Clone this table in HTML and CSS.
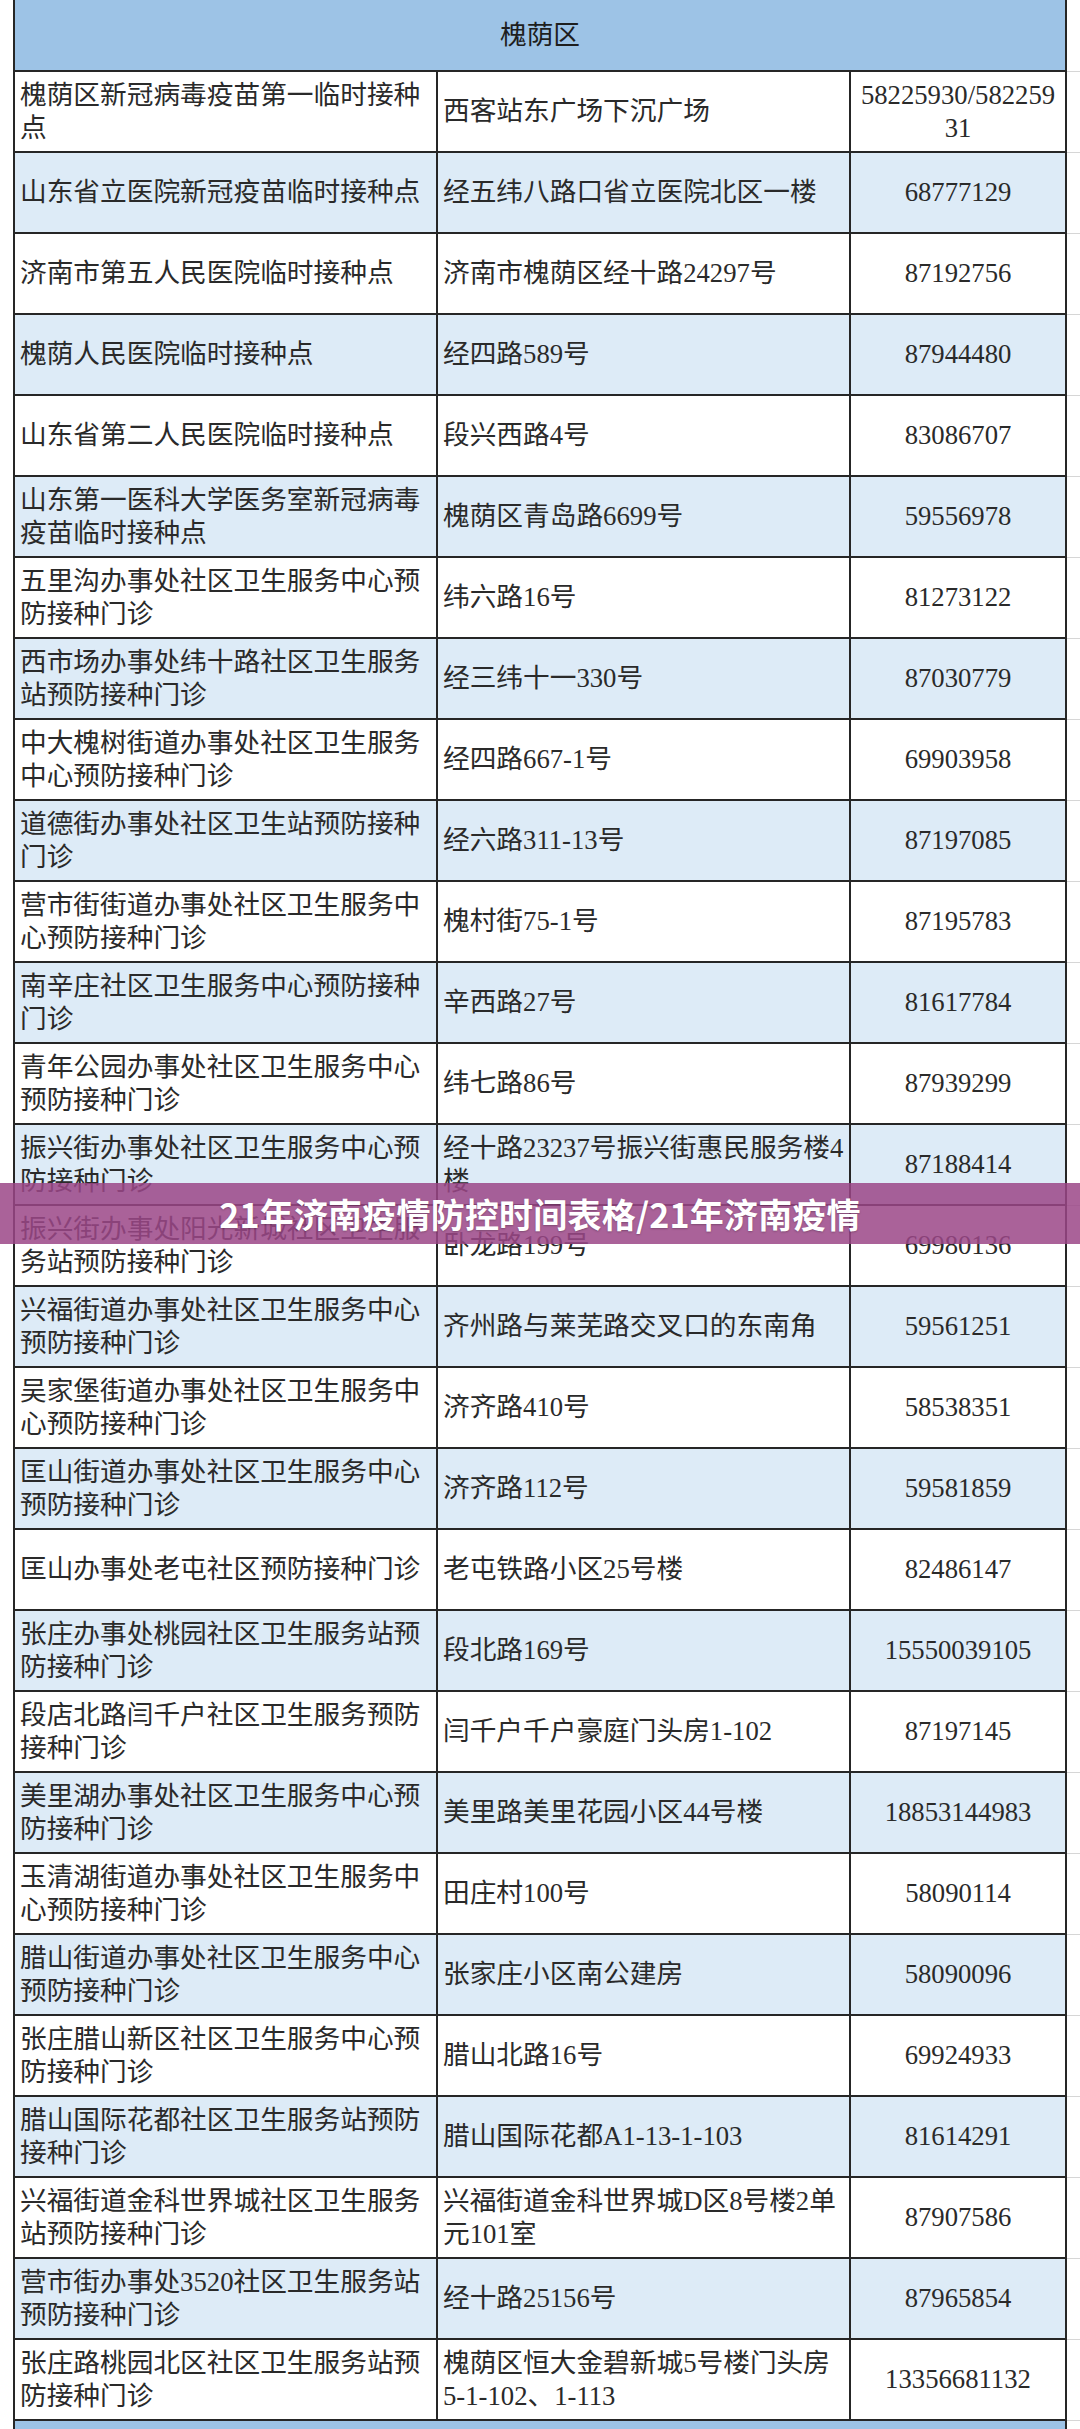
FILE: index.html
```html
<!DOCTYPE html>
<html lang="zh-CN">
<head>
<meta charset="utf-8">
<title>21年济南疫情防控时间表格/21年济南疫情</title>
<link rel="stylesheet" href="styles.css">
</head>
<body>
<div class="page">
<table class="sheet">
<colgroup><col class="c-name"><col class="c-addr"><col class="c-tel"><col class="c-pad"></colgroup>
<tr class="district"><th colspan="3">槐荫区</th><td class="pad"></td></tr>
<tr class="row"><td class="name">槐荫区新冠病毒疫苗第一临时接种点</td><td class="addr">西客站东广场下沉广场</td><td class="tel">58225930/58225931</td><td class="pad"></td></tr>
<tr class="row"><td class="name">山东省立医院新冠疫苗临时接种点</td><td class="addr">经五纬八路口省立医院北区一楼</td><td class="tel">68777129</td><td class="pad"></td></tr>
<tr class="row"><td class="name">济南市第五人民医院临时接种点</td><td class="addr">济南市槐荫区经十路24297号</td><td class="tel">87192756</td><td class="pad"></td></tr>
<tr class="row"><td class="name">槐荫人民医院临时接种点</td><td class="addr">经四路589号</td><td class="tel">87944480</td><td class="pad"></td></tr>
<tr class="row"><td class="name">山东省第二人民医院临时接种点</td><td class="addr">段兴西路4号</td><td class="tel">83086707</td><td class="pad"></td></tr>
<tr class="row"><td class="name">山东第一医科大学医务室新冠病毒疫苗临时接种点</td><td class="addr">槐荫区青岛路6699号</td><td class="tel">59556978</td><td class="pad"></td></tr>
<tr class="row"><td class="name">五里沟办事处社区卫生服务中心预防接种门诊</td><td class="addr">纬六路16号</td><td class="tel">81273122</td><td class="pad"></td></tr>
<tr class="row"><td class="name">西市场办事处纬十路社区卫生服务站预防接种门诊</td><td class="addr">经三纬十一330号</td><td class="tel">87030779</td><td class="pad"></td></tr>
<tr class="row"><td class="name">中大槐树街道办事处社区卫生服务中心预防接种门诊</td><td class="addr">经四路667-1号</td><td class="tel">69903958</td><td class="pad"></td></tr>
<tr class="row"><td class="name">道德街办事处社区卫生站预防接种门诊</td><td class="addr">经六路311-13号</td><td class="tel">87197085</td><td class="pad"></td></tr>
<tr class="row"><td class="name">营市街街道办事处社区卫生服务中心预防接种门诊</td><td class="addr">槐村街75-1号</td><td class="tel">87195783</td><td class="pad"></td></tr>
<tr class="row"><td class="name">南辛庄社区卫生服务中心预防接种门诊</td><td class="addr">辛西路27号</td><td class="tel">81617784</td><td class="pad"></td></tr>
<tr class="row"><td class="name">青年公园办事处社区卫生服务中心预防接种门诊</td><td class="addr">纬七路86号</td><td class="tel">87939299</td><td class="pad"></td></tr>
<tr class="row"><td class="name">振兴街办事处社区卫生服务中心预防接种门诊</td><td class="addr">经十路23237号振兴街惠民服务楼4楼</td><td class="tel">87188414</td><td class="pad"></td></tr>
<tr class="row"><td class="name">振兴街办事处阳光新城社区卫生服务站预防接种门诊</td><td class="addr">卧龙路199号</td><td class="tel">69980136</td><td class="pad"></td></tr>
<tr class="row"><td class="name">兴福街道办事处社区卫生服务中心预防接种门诊</td><td class="addr">齐州路与莱芜路交叉口的东南角</td><td class="tel">59561251</td><td class="pad"></td></tr>
<tr class="row"><td class="name">吴家堡街道办事处社区卫生服务中心预防接种门诊</td><td class="addr">济齐路410号</td><td class="tel">58538351</td><td class="pad"></td></tr>
<tr class="row"><td class="name">匡山街道办事处社区卫生服务中心预防接种门诊</td><td class="addr">济齐路112号</td><td class="tel">59581859</td><td class="pad"></td></tr>
<tr class="row"><td class="name">匡山办事处老屯社区预防接种门诊</td><td class="addr">老屯铁路小区25号楼</td><td class="tel">82486147</td><td class="pad"></td></tr>
<tr class="row"><td class="name">张庄办事处桃园社区卫生服务站预防接种门诊</td><td class="addr">段北路169号</td><td class="tel">15550039105</td><td class="pad"></td></tr>
<tr class="row"><td class="name">段店北路闫千户社区卫生服务预防接种门诊</td><td class="addr">闫千户千户豪庭门头房1-102</td><td class="tel">87197145</td><td class="pad"></td></tr>
<tr class="row"><td class="name">美里湖办事处社区卫生服务中心预防接种门诊</td><td class="addr">美里路美里花园小区44号楼</td><td class="tel">18853144983</td><td class="pad"></td></tr>
<tr class="row"><td class="name">玉清湖街道办事处社区卫生服务中心预防接种门诊</td><td class="addr">田庄村100号</td><td class="tel">58090114</td><td class="pad"></td></tr>
<tr class="row"><td class="name">腊山街道办事处社区卫生服务中心预防接种门诊</td><td class="addr">张家庄小区南公建房</td><td class="tel">58090096</td><td class="pad"></td></tr>
<tr class="row"><td class="name">张庄腊山新区社区卫生服务中心预防接种门诊</td><td class="addr">腊山北路16号</td><td class="tel">69924933</td><td class="pad"></td></tr>
<tr class="row"><td class="name">腊山国际花都社区卫生服务站预防接种门诊</td><td class="addr">腊山国际花都A1-13-1-103</td><td class="tel">81614291</td><td class="pad"></td></tr>
<tr class="row"><td class="name">兴福街道金科世界城社区卫生服务站预防接种门诊</td><td class="addr">兴福街道金科世界城D区8号楼2单元101室</td><td class="tel">87907586</td><td class="pad"></td></tr>
<tr class="row"><td class="name">营市街办事处3520社区卫生服务站预防接种门诊</td><td class="addr">经十路25156号</td><td class="tel">87965854</td><td class="pad"></td></tr>
<tr class="row"><td class="name">张庄路桃园北区社区卫生服务站预防接种门诊</td><td class="addr">槐荫区恒大金碧新城5号楼门头房5-1-102、1-113</td><td class="tel">13356681132</td><td class="pad"></td></tr>
<tr class="district next"><th colspan="3"></th><td class="pad"></td></tr>
</table>
<div class="banner">21年济南疫情防控时间表格/21年济南疫情</div>
</div>
</body>
</html>
```

FILE: styles.css
```css
html, body {
  margin: 0;
  padding: 0;
  background: #ffffff;
}

.page {
  position: relative;
  width: 1080px;
  height: 2429px;
  overflow: hidden;
}

.sheet {
  margin-left: 13px;
  width: 1066px;
  table-layout: fixed;
  border-collapse: collapse;
  font-family: "Liberation Serif", "Noto Sans CJK SC", serif;
  font-size: 26.7px;
  line-height: 33px;
  color: #2a2a2a;
}

.c-name { width: 423px; }
.c-addr { width: 413px; }
.c-tel { width: 216px; }
.c-pad { width: 14px; }

.district {
  height: 71px;
}

.district th {
  background: #9dc3e6;
  border: 2px solid #262626;
  border-top: none;
  font-weight: normal;
  text-align: center;
  vertical-align: middle;
  padding: 0;
  color: #1e1e1e;
}

.row {
  height: 81px;
}

.row td {
  vertical-align: middle;
}

.name, .addr, .tel {
  border: 2px solid #262626;
  padding: 0 5px;
  background: #ffffff;
}

.row:nth-child(odd) .name,
.row:nth-child(odd) .addr,
.row:nth-child(odd) .tel {
  background: #ddebf7;
}

.name, .addr {
  text-align: left;
}

.tel {
  text-align: center;
  word-break: break-all;
  padding: 0 4px;
}

.pad {
  border: none;
  border-bottom: 1px solid #d6d6d6;
  background: #ffffff;
  padding: 0;
}

.banner {
  position: absolute;
  left: 0;
  right: 0;
  top: 1183px;
  height: 61px;
  display: flex;
  align-items: center;
  justify-content: center;
  background: rgba(155, 70, 135, 0.85);
  color: #ffffff;
  font-family: "Noto Sans CJK SC", "Noto Sans", sans-serif;
  font-weight: bold;
  font-size: 34px;
  letter-spacing: 0.2px;
  text-shadow: 0 1px 2px rgba(0, 0, 0, 0.25);
}
```
